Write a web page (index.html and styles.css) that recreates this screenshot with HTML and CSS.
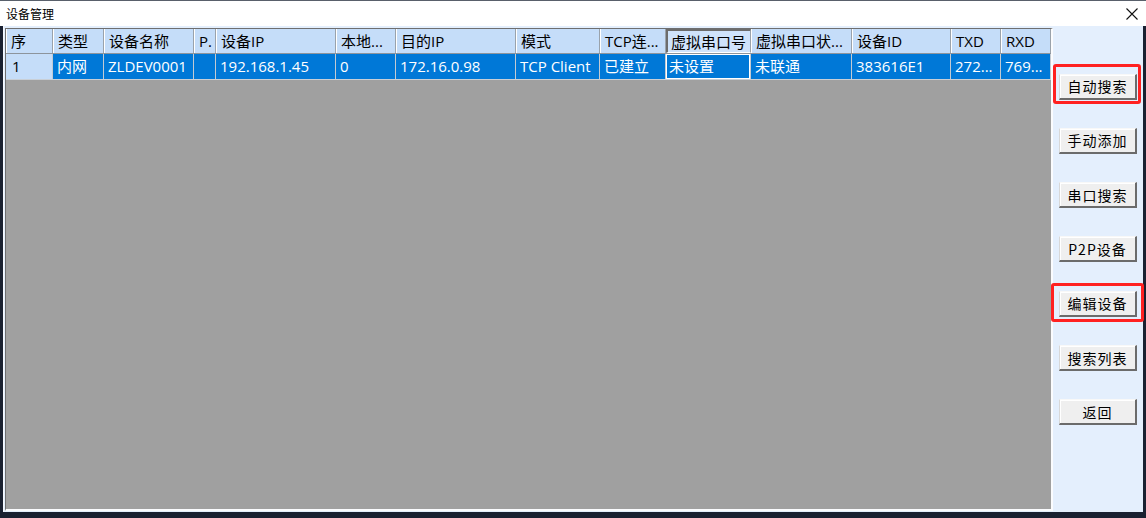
FILE: index.html
```html
<!DOCTYPE html>
<html lang="zh-CN">
<head>
<meta charset="utf-8">
<title>设备管理</title>
<link rel="stylesheet" href="styles.css">
</head>
<body>
<div class="window">
  <div class="titlebar">
    <span class="title">设备管理</span>
    <span class="close" aria-label="关闭">
      <svg width="12" height="12" viewBox="0 0 12 12"><path d="M0.5 0.5L11.5 11.5M11.5 0.5L0.5 11.5" stroke="#111" stroke-width="1.1" fill="none"/></svg>
    </span>
  </div>
  <div class="client">
    <div class="listview">
      <div class="lv-head">
        <div class="hc">序</div>
        <div class="hc">类型</div>
        <div class="hc">设备名称</div>
        <div class="hc">P.</div>
        <div class="hc">设备IP</div>
        <div class="hc">本地...</div>
        <div class="hc">目的IP</div>
        <div class="hc">模式</div>
        <div class="hc">TCP连...</div>
        <div class="hc hc-focus">虚拟串口号</div>
        <div class="hc">虚拟串口状...</div>
        <div class="hc">设备ID</div>
        <div class="hc">TXD</div>
        <div class="hc">RXD</div>
      </div>
      <div class="lv-row">
        <div class="rc rc-first">1</div>
        <div class="rc">内网</div>
        <div class="rc">ZLDEV0001</div>
        <div class="rc"></div>
        <div class="rc">192.168.1.45</div>
        <div class="rc">0</div>
        <div class="rc">172.16.0.98</div>
        <div class="rc">TCP Client</div>
        <div class="rc">已建立</div>
        <div class="rc rc-focus">未设置</div>
        <div class="rc">未联通</div>
        <div class="rc">383616E1</div>
        <div class="rc">272...</div>
        <div class="rc">769...</div>
      </div>
    </div>
    <div class="side">
      <div class="btn-wrap mark-a"><button class="btn">自动搜索</button></div>
      <div class="btn-wrap"><button class="btn">手动添加</button></div>
      <div class="btn-wrap"><button class="btn">串口搜索</button></div>
      <div class="btn-wrap"><button class="btn">P2P设备</button></div>
      <div class="btn-wrap mark-b"><button class="btn">编辑设备</button></div>
      <div class="btn-wrap"><button class="btn">搜索列表</button></div>
      <div class="btn-wrap"><button class="btn">返回</button></div>
    </div>
  </div>
</div>
</body>
</html>
```

FILE: styles.css
```css
* { box-sizing: border-box; }
html, body {
  margin: 0;
  padding: 0;
  width: 1146px;
  height: 518px;
  overflow: hidden;
  background: #1a2131;
  font-family: "Noto Sans CJK SC", "Noto Sans", sans-serif;
}
.window {
  width: 1146px;
  height: 512px;
  display: flex;
  flex-direction: column;
}
.titlebar {
  height: 26px;
  background: #ffffff;
  border-top: 1px solid #59606b;
  display: flex;
  align-items: center;
  justify-content: space-between;
  padding: 0 8px 0 6px;
}
.title {
  font-size: 12px;
  color: #000;
  line-height: 1;
}
.close {
  display: flex;
  margin-top: 1px;
}
.client {
  flex: 1;
  margin: 0 3px;
  background: #e4effd;
  display: flex;
  border-left: 1px solid #f6f9fe;
}
.listview {
  margin: 2px 0 1px 1px;
  width: 1048px;
  background: #a0a0a0;
  border-top: 1px solid #6f6f6f;
  border-left: 1px solid #6f6f6f;
  border-right: 2px solid #fbfcfe;
  border-bottom: 2px solid #fbfcfe;
  font-family: "Open Sans", "Noto Sans CJK SC", sans-serif;
}
.lv-head, .lv-row {
  display: grid;
  grid-template-columns: 47px 51px 90px 22px 120px 60px 120px 84px 66px 85px 101px 99px 50px 50px;
}
.lv-head {
  height: 25px;
  border-bottom: 1px solid #8d949c;
}
.hc {
  background: #c5ddf9;
  border-right: 1px solid #9aa2ab;
  box-shadow: inset 1px 0 #ffffff;
  font-size: 15px;
  line-height: 24px;
  padding-left: 5px;
  color: #000;
  white-space: nowrap;
  overflow: hidden;
}
.hc-focus {
  border-left: 2px solid #6c6c6c;
  border-top: 2px solid #6c6c6c;
  box-shadow: none;
  background: #cfe3fb;
  line-height: 22px;
  padding-left: 3px;
  border-bottom: 1px solid #ffffff;
}
.lv-row {
  height: 26px;
  border-bottom: 1px solid #c9cfd6;
}
.rc {
  background: #0078d7;
  color: #ffffff;
  border-right: 1px solid #c3cad2;
  font-size: 15px;
  line-height: 25px;
  padding-left: 4px;
  white-space: nowrap;
  overflow: hidden;
}
.rc-first {
  background: #c5ddf9;
  color: #000;
  padding-left: 6px;
}
.rc-focus {
  box-shadow: inset 0 0 0 1px #ffffff;
  padding-left: 3px;
}
.side {
  flex: 1;
  display: flex;
  flex-direction: column;
  padding: 47px 0 0 6px;
  gap: 28.33px;
}
.btn-wrap {
  position: relative;
  width: 78px;
  height: 26px;
}
.btn {
  width: 78px;
  height: 26px;
  margin: 0;
  padding: 0;
  background: #efefef;
  border-style: solid;
  border-width: 1px 2px 2px 1px;
  border-color: #f8f8f8 #6b6b6b #6b6b6b #d8d8d8;
  box-shadow: inset 1px 1px 0 #ffffff;
  font-family: "Noto Sans CJK SC", sans-serif;
  font-size: 14px;
  letter-spacing: 1px;
  color: #000;
  line-height: 22px;
}
.mark-a::after,
.mark-b::after {
  content: "";
  position: absolute;
  border: 3px solid #ff2121;
  border-radius: 3px;
  pointer-events: none;
}
.mark-a::after {
  left: -6px;
  right: -4px;
  top: -9px;
  bottom: -5px;
}
.mark-b::after {
  left: -8px;
  right: -7px;
  top: -7px;
  bottom: -6px;
}
```
